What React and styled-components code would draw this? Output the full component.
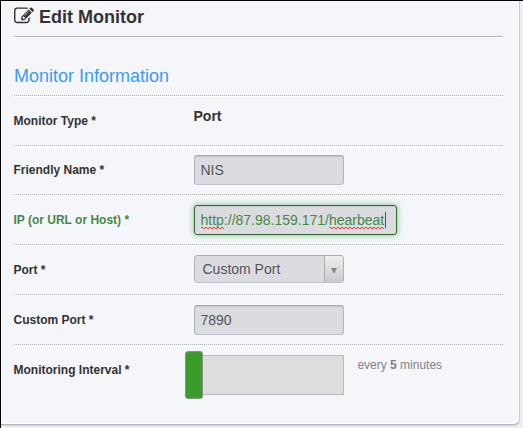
import React from "react";
import styled, { createGlobalStyle, css } from "styled-components";

const GlobalStyle = createGlobalStyle`
  * { box-sizing: border-box; }
  html, body { margin: 0; padding: 0; overflow: hidden; }
  body {
    background: #ecedf2;
    font-family: "Liberation Sans", Arial, sans-serif;
    color: #333;
  }
`;

const Frame = styled.main`
  width: 523px;
  height: 428px;
  overflow: hidden;
  border-top: 1px solid #000;
  border-left: 1px solid #000;
  background: #eeeff5;
`;

const Card = styled.section`
  width: 519px;
  height: 424px;
  padding: 0 16px 0 13px;
  background: #f5f6fa;
  border-right: 1px solid #c9c9d1;
  border-bottom: 1px solid #b5b5ba;
  border-radius: 0 0 6px 0;
  box-shadow: inset -1px -1px 0 #fff, 0 1px 1px #d3d3da;
`;

const Header = styled.header`
  display: flex;
  height: 36px;
  border-bottom: 1px solid #b7b8b9;
  box-shadow: 0 1px 0 #fff;
`;

const EditIcon = styled.svg`
  flex: none;
  width: 20px;
  height: 20px;
  margin-top: 5px;
`;

const Title = styled.h1`
  margin: 5px 0 0 5px;
  font-size: 18px;
  line-height: 22px;
  font-weight: 700;
`;

const dotted = css`
  border-bottom: 1px dotted #acadb0;
  box-shadow: 0 1px 0 #fff;
`;

const SectionTitle = styled.h2`
  height: 59px;
  margin: 0;
  padding-top: 28px;
  font-size: 18px;
  line-height: 22px;
  font-weight: 400;
  color: #3a9bf9;
  ${dotted}
`;

const Row = styled.div`
  display: grid;
  grid-template-columns: 180px 1fr;
  align-items: start;
  height: ${(p) => p.$height || 50}px;
  padding-top: ${(p) => p.$top || 10}px;
  ${(p) => !p.$last && dotted}
`;

const Label = styled.label`
  margin-left: -0.5px;
  padding-top: 8px;
  font-size: 12px;
  line-height: 14px;
  font-weight: 700;
  color: ${(p) => (p.$valid ? "#468847" : "#333")};
`;

const Value = styled.strong`
  margin-left: -0.5px;
  padding-top: 2px;
  font-size: 14px;
  line-height: 16px;
`;

const Field = styled.div`
  display: flex;
  align-items: center;
  width: ${(p) => (p.$focused ? 203 : 150)}px;
  height: 30px;
  padding: 0 6px 0 5.5px;
  font-size: 14px;
  line-height: 20px;
  color: #555;
  background: #dbdce0;
  border: 1px solid;
  border-color: #a9aab8 #b5b6c2 #c0c1ca #b0b1bf;
  border-radius: 3px;
  box-shadow: inset 0 1px 1px rgba(0, 0, 0, 0.12);
  ${(p) =>
    p.$focused &&
    css`
      color: #468847;
      border-color: #356635;
      box-shadow: inset 0 1px 1px rgba(0, 0, 0, 0.08), 0 0 6px #7aba7b;
    `}
`;

const Misspelled = styled.span`
  background:
    repeating-linear-gradient(90deg, #f33 0 2px, transparent 2px 4px) 0 17px / 100% 1px no-repeat,
    repeating-linear-gradient(90deg, transparent 0 2px, #f33 2px 4px) 0 18px / 100% 1px no-repeat;
`;

const Caret = styled.span`
  width: 1px;
  height: 16px;
  margin-left: 1px;
  background: #356635;
`;

const Select = styled.div`
  display: flex;
  width: 150px;
  height: 28px;
  overflow: hidden;
  font-size: 14px;
  line-height: 26px;
  color: #555;
  background: #dbdce0;
  border: 1px solid;
  border-color: #a9aab8 #b0b1bf #c0c1ca #b0b1bf;
  border-radius: 4px;
`;

const SelectText = styled.span`
  flex: 1;
  padding-left: 7.5px;
`;

const SelectArrow = styled.span`
  display: flex;
  align-items: center;
  justify-content: center;
  width: 19px;
  padding-top: 2px;
  padding-right: 1px;
  border-left: 1px solid #aaa;
  background: linear-gradient(#eeeeef, #cbcbcd);
`;

const IntervalControl = styled.div`
  display: flex;
  align-items: flex-start;
`;

const Track = styled.div`
  position: relative;
  width: 150px;
  height: 40px;
  background: #ddd;
  border: 1px solid #bbb;
`;

const Handle = styled.span`
  position: absolute;
  top: -5px;
  left: -10px;
  width: 18px;
  height: 48px;
  background: #3a9c29;
  border: 1px solid #8b8f88;
  border-radius: 3px;
`;

const IntervalText = styled.span`
  margin: 3px 0 0 13.4px;
  font-size: 12px;
  line-height: 14px;
  color: #7f808e;
`;

export default function App() {
  return (
    <>
      <GlobalStyle />
      <Frame>
        <Card>
          <Header>
            <EditIcon viewBox="0 0 1792 1792">
              <path
                d="M888 1184l116-116-152-152-116 116v56h96v96h56zm440-720q-16-16-33 1l-350 350q-17 17-1 33t33-1l350-350q17-17 1-33zm80 594v190q0 119-84.5 203.5t-203.5 84.5h-832q-119 0-203.5-84.5t-84.5-203.5v-832q0-119 84.5-203.5t203.5-84.5h832q63 0 117 25 15 7 18 23 3 17-9 29l-49 49q-14 14-32 8-23-6-45-6h-832q-66 0-113 47t-47 113v832q0 66 47 113t113 47h832q66 0 113-47t47-113v-126q0-13 9-22l64-64q15-15 35-7t20 29zm-96-738l288 288-672 672h-288v-288zm444 132l-92 92-288-288 92-92q28-28 68-28t68 28l152 152q28 28 28 68t-28 68z"
                fill="#333"
              />
            </EditIcon>
            <Title>Edit Monitor</Title>
          </Header>
          <SectionTitle>Monitor Information</SectionTitle>
          <Row>
            <Label>Monitor Type *</Label>
            <Value>Port</Value>
          </Row>
          <Row $height={49} $top={9}>
            <Label>Friendly Name *</Label>
            <Field>NIS</Field>
          </Row>
          <Row>
            <Label $valid>IP (or URL or Host) *</Label>
            <Field $focused>
              <Misspelled>http</Misspelled>://87.98.159.171/<Misspelled>hearbeat</Misspelled>
              <Caret />
            </Field>
          </Row>
          <Row>
            <Label>Port *</Label>
            <Select>
              <SelectText>Custom Port</SelectText>
              <SelectArrow>
                <svg width="6" height="5" viewBox="0 0 6 5">
                  <path d="M0 0h6L3.4 5h-.8z" fill="#888" />
                </svg>
              </SelectArrow>
            </Select>
          </Row>
          <Row>
            <Label>Custom Port *</Label>
            <Field>7890</Field>
          </Row>
          <Row $height={78} $last>
            <Label>Monitoring Interval *</Label>
            <IntervalControl>
              <Track>
                <Handle />
              </Track>
              <IntervalText>
                every <b>5</b> minutes
              </IntervalText>
            </IntervalControl>
          </Row>
        </Card>
      </Frame>
    </>
  );
}
